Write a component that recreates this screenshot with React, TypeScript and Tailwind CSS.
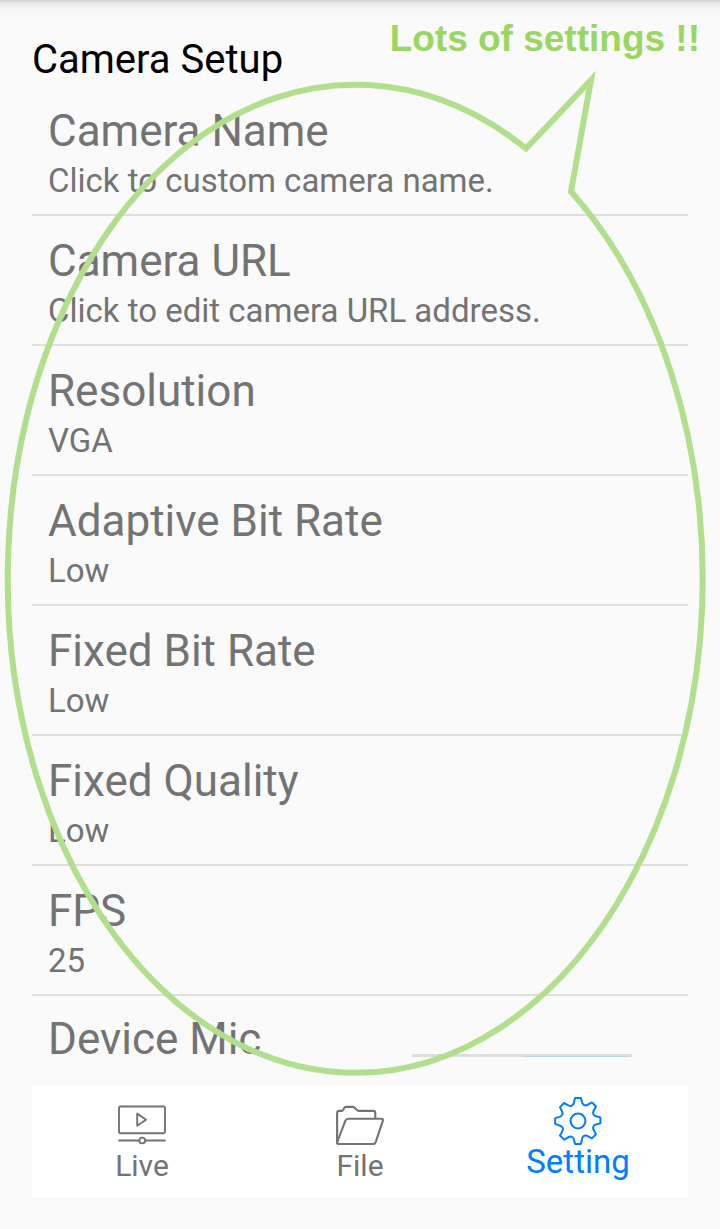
import type { ReactNode } from "react";

const settings = [
  { title: "Camera Name", summary: "Click to custom camera name." },
  { title: "Camera URL", summary: "Click to edit camera URL address." },
  { title: "Resolution", summary: "VGA" },
  { title: "Adaptive Bit Rate", summary: "Low" },
  { title: "Fixed Bit Rate", summary: "Low" },
  { title: "Fixed Quality", summary: "Low" },
  { title: "FPS", summary: "25" },
];

function SettingRow({ title, summary }: { title: string; summary: string }) {
  return (
    <li className="border-b-2 border-[#dfdfdf]">
      <button type="button" className="block w-full px-4 pt-[19px] pb-[9px] text-left">
        <span className="block text-[44px] leading-[52px]">{title}</span>
        <span className="block text-[33px] leading-[48px]">{summary}</span>
      </button>
    </li>
  );
}

function LiveIcon() {
  return (
    <svg viewBox="0 0 48 48" className="size-12" fill="none" stroke="currentColor" strokeWidth="1.9" strokeLinejoin="round" strokeLinecap="round" aria-hidden="true">
      <rect x="1" y="5.5" width="46" height="26.700" rx="1.500" />
      <path d="M19.200 12.600v12.200l8.800-6.100z" />
      <path d="M1 39.500h20M27.400 39.500h19.600" />
      <circle cx="24.200" cy="39.500" r="2.900" />
    </svg>
  );
}

function FileIcon() {
  return (
    <svg viewBox="0 0 48 48" className="size-12" fill="none" stroke="currentColor" strokeWidth="2.1" strokeLinejoin="round" strokeLinecap="round" aria-hidden="true">
      <path d="M1.100 41.500V12.200q0-2.300 2.300-2.300h2.200q1.100 0 1.600-1l.9-1.800q.6-1.200 2-1.200h6.500q1.200 0 2 .9l2.400 2.200q.9.900 2.200.9H37q2.300 0 2.300 2.300v4.500" />
      <path d="M1.100 41.500L9.400 19.700q.8-2 3-2H45q2.600 0 1.700 2.400L39.800 40.800q-.8 2.200-3.200 2.200H3.200Q1.100 43 1.100 41.500z" />
    </svg>
  );
}

function SettingIcon() {
  return (
    <svg viewBox="0 0 48 48" className="size-12" fill="none" stroke="currentColor" strokeWidth="2" strokeLinejoin="round" aria-hidden="true">
      <path
        d="M21.100 1h5.800l1.500 5.100q.5 1.400 1.900 2 1.500.6 2.900-.1l4.700-2.600 4.100 4.100-2.600 4.700q-.7 1.400-.1 2.900.6 1.400 2 1.900l5.100 1.500v5.800l-5.100 1.500q-1.400.5-2 1.900-.6 1.500.1 2.900l2.600 4.700-4.100 4.100-4.700-2.600q-1.400-.7-2.900-.1-1.400.6-1.900 2L26.900 47h-5.800l-1.500-5.100q-.5-1.400-1.900-2-1.500-.6-2.900.1l-4.700 2.600L6 38.500l2.600-4.700q.7-1.400.1-2.900-.6-1.400-2-1.900L1.200 26.900v-5.800l5.100-1.500q1.400-.5 2-1.900.6-1.500-.1-2.900L6 10.100 10.100 6l4.700 2.600q1.400.7 2.900.1 1.400-.6 1.900-2z"
      />
      <circle cx="24" cy="24" r="7.400" />
    </svg>
  );
}

function Tab({ label, icon, active = false }: { label: string; icon: ReactNode; active?: boolean }) {
  return (
    <a
      href={`#${label.toLowerCase()}`}
      aria-current={active ? "page" : undefined}
      className={
        active
          ? "flex flex-1 flex-col items-center pt-3 text-[33px] leading-[34px] text-[#007eff]"
          : "flex flex-1 flex-col items-center pt-4 text-[30px] leading-[34px]"
      }
    >
      {icon}
      <span>{label}</span>
    </a>
  );
}

function Callout() {
  return (
    <div className="pointer-events-none absolute inset-0">
      <svg viewBox="0 0 720 1229" className="w-full" fill="none" aria-hidden="true">
        <path
          d="M526 148.500A347.500 494 0 1 0 571 191.500L591 80z"
          stroke="#b1df8c"
          strokeWidth="6"
          strokeMiterlimit="10"
        />
      </svg>
      <p className="absolute top-4 right-5 text-right font-['Liberation_Sans',Arial,sans-serif] text-[37px] leading-[46px] font-bold text-[#99d760]">
        Lots of settings !!
      </p>
    </div>
  );
}

export default function App() {
  return (
    <div className="relative bg-[#fafafa] font-[Roboto,sans-serif] text-[#737373]">
      <main className="bg-[linear-gradient(#d6d6d6,#ececec_4px,#f6f6f6_10px,#fafafa_18px)] bg-[length:100%_18px] bg-no-repeat px-8 pb-8">
        <h1 className="pt-9 pb-0.5 text-[40px] leading-[48px] text-black">Camera Setup</h1>
        <ul>
          {settings.map((item) => (
            <SettingRow key={item.title} {...item} />
          ))}
          <li className="flex items-end justify-between pr-14 pl-4">
            <label htmlFor="device-mic" className="pt-[17px] pb-3 text-[44px] leading-[52px] whitespace-nowrap">
              Device Mic
            </label>
            <span className="mb-5 flex h-[3px] overflow-hidden">
              <input
                id="device-mic"
                type="checkbox"
                role="switch"
                defaultChecked
                className="h-14 w-[220px] shrink-0 appearance-none bg-[#dcdddd] bg-[linear-gradient(#b9d9e3,#b9d9e3)] bg-[length:104px_54px] bg-[position:right_4px_top_2px] bg-no-repeat"
              />
            </span>
          </li>
        </ul>
        <nav className="mt-2 flex h-28 bg-white px-px">
          <Tab label="Live" icon={<LiveIcon />} />
          <Tab label="File" icon={<FileIcon />} />
          <Tab label="Setting" icon={<SettingIcon />} active />
        </nav>
      </main>
      <Callout />
    </div>
  );
}
